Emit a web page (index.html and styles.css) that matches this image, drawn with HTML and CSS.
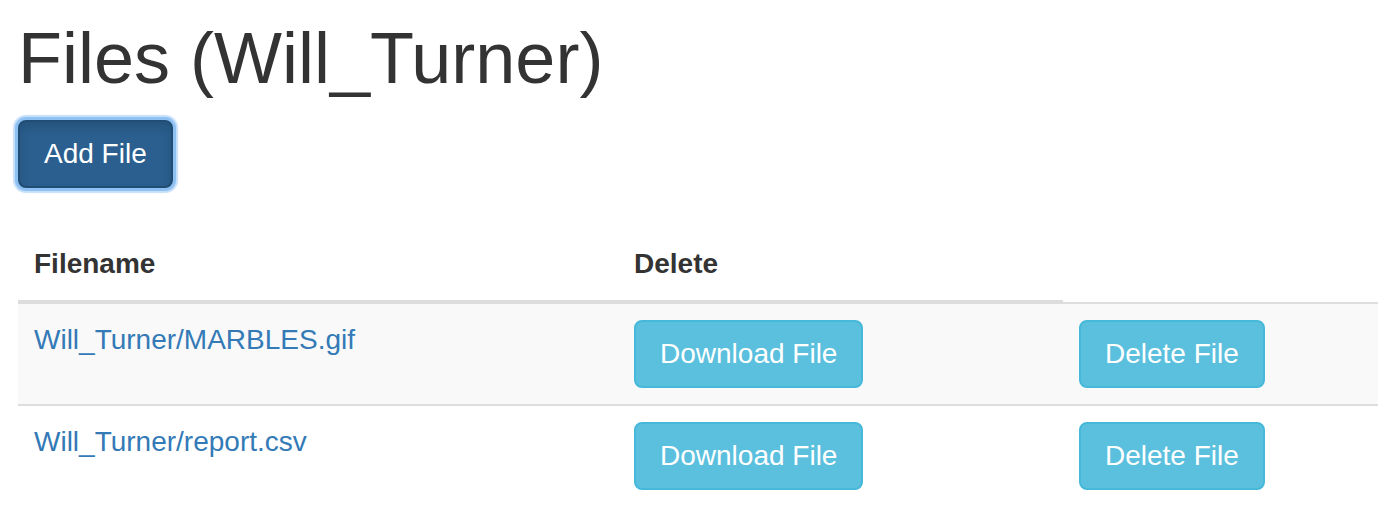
FILE: index.html
```html
<!DOCTYPE html>
<html>
<head>
<meta charset="utf-8">
<title>Files</title>
<link rel="stylesheet" href="styles.css">
</head>
<body>
<div class="page">
  <h1 class="title">Files (Will_Turner)</h1>
  <button class="btn btn-primary" type="button">Add File</button>
  <table class="files">
    <thead>
      <tr>
        <th class="col-name">Filename</th>
        <th class="col-download">Delete</th>
        <th class="col-delete empty"></th>
      </tr>
    </thead>
    <tbody>
      <tr class="odd">
        <td><a class="file-link" href="#">Will_Turner/MARBLES.gif</a></td>
        <td><button class="btn btn-info" type="button">Download File</button></td>
        <td><button class="btn btn-info" type="button">Delete File</button></td>
      </tr>
      <tr class="even">
        <td><a class="file-link" href="#">Will_Turner/report.csv</a></td>
        <td><button class="btn btn-info" type="button">Download File</button></td>
        <td><button class="btn btn-info" type="button">Delete File</button></td>
      </tr>
    </tbody>
  </table>
</div>
</body>
</html>
```

FILE: styles.css
```css
html, body {
  margin: 0;
  padding: 0;
  background: #fff;
}
body {
  font-family: "Liberation Sans", Arial, Helvetica, sans-serif;
  font-size: 28px;
  line-height: 40px;
  color: #333;
  overflow-x: hidden;
}
.page {
  padding: 0 0 0 18px;
}
.title {
  font-size: 72px;
  font-weight: 500;
  line-height: 79px;
  margin: 19px 0 22px 0;
  color: #333;
}
.btn {
  display: inline-block;
  font-family: inherit;
  font-size: 28px;
  line-height: 40px;
  padding: 12px 24px;
  border: 2px solid transparent;
  border-radius: 8px;
  color: #fff;
  cursor: pointer;
  white-space: nowrap;
  vertical-align: middle;
}
.btn-primary {
  background: #2b5f8f;
  border-color: #204d74;
  box-shadow: inset 0 6px 10px rgba(0, 0, 0, 0.125),
              0 0 0 3px #8fc1f3,
              0 0 1px 5px rgba(150, 196, 245, 0.55);
  margin-left: 0;
}
.btn-info {
  background: #5bc0de;
  border-color: #46b8da;
}
.files {
  margin-top: 40px;
  width: 100%;
  border-collapse: separate;
  border-spacing: 0;
}
.files th,
.files td {
  padding: 16px;
  text-align: left;
  vertical-align: top;
  line-height: 40px;
}
.files th {
  font-weight: bold;
  border-bottom: 4px solid #ddd;
}
.files th.empty {
  border-bottom-width: 2px;
}
.col-name { width: 568px; }
.col-download { width: 413px; }
.files tbody tr.odd td {
  background: #f9f9f9;
}
.files tbody tr.even td {
  border-top: 2px solid #ddd;
}
.file-link {
  color: #337ab7;
  text-decoration: none;
}
```
